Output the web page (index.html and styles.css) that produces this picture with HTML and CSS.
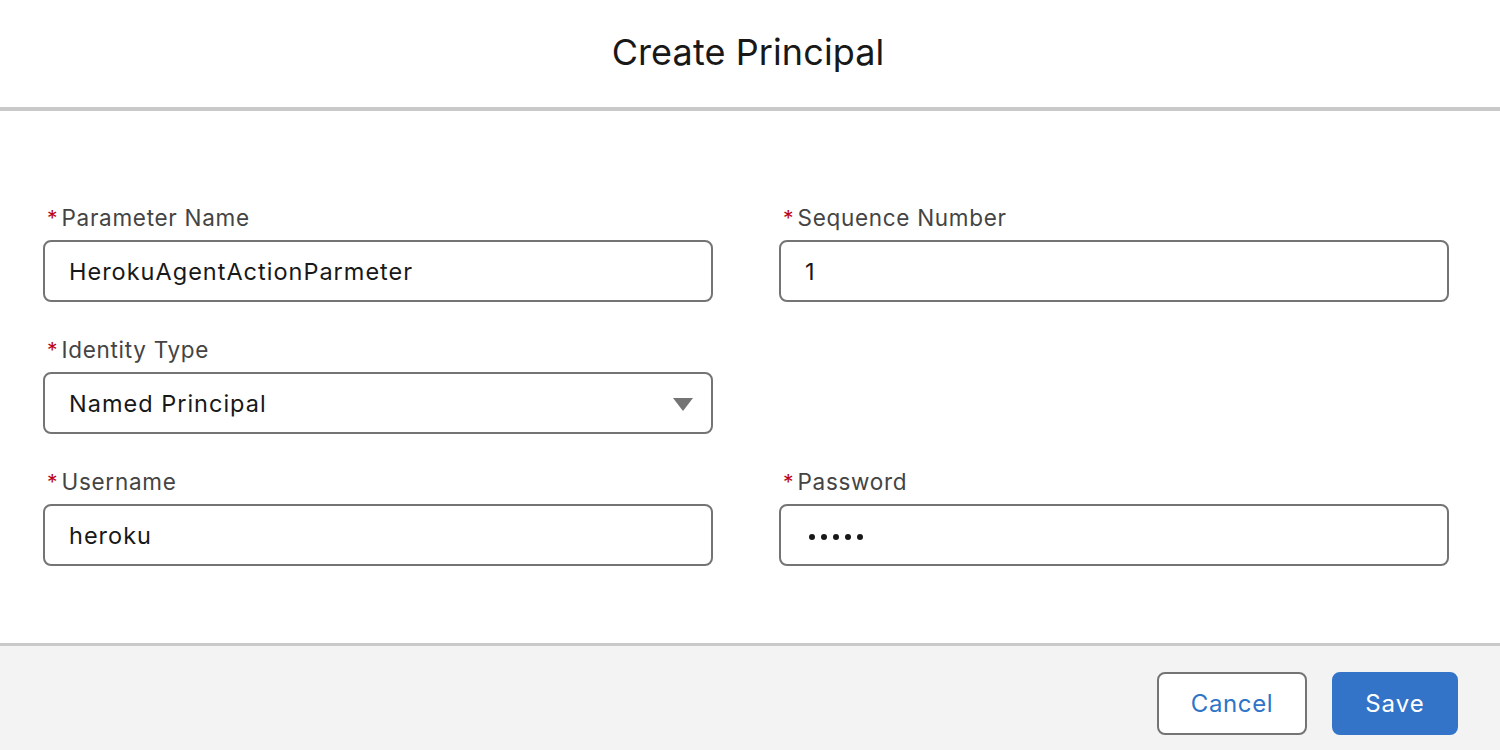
FILE: index.html
```html
<!DOCTYPE html>
<html lang="en">
<head>
<meta charset="utf-8">
<title>Create Principal</title>
<link rel="stylesheet" href="styles.css">
</head>
<body>
<div class="modal">
  <header class="modal-header">
    <h1 class="modal-title">Create Principal</h1>
  </header>
  <main class="modal-body">
    <div class="form-grid">
      <div class="field">
        <label class="field-label"><abbr class="req">*</abbr>Parameter Name</label>
        <div class="input"><span class="value">HerokuAgentActionParmeter</span></div>
      </div>
      <div class="field">
        <label class="field-label"><abbr class="req">*</abbr>Sequence Number</label>
        <div class="input"><span class="value">1</span></div>
      </div>
      <div class="field">
        <label class="field-label"><abbr class="req">*</abbr>Identity Type</label>
        <div class="input select">
          <span class="value">Named Principal</span>
          <svg class="caret" width="20" height="13" viewBox="0 0 20 13"><path d="M0 0 H20 L10 13 Z" fill="#747474"/></svg>
        </div>
      </div>
      <div class="field empty"></div>
      <div class="field">
        <label class="field-label"><abbr class="req">*</abbr>Username</label>
        <div class="input"><span class="value">heroku</span></div>
      </div>
      <div class="field">
        <label class="field-label"><abbr class="req">*</abbr>Password</label>
        <div class="input"><span class="dots"><i></i><i></i><i></i><i></i><i></i></span></div>
      </div>
    </div>
  </main>
  <footer class="modal-footer">
    <button class="btn btn-neutral">Cancel</button>
    <button class="btn btn-brand">Save</button>
  </footer>
</div>
</body>
</html>
```
FILE: styles.css
```css
* { box-sizing: border-box; }
html, body {
  margin: 0;
  padding: 0;
  background: #ffffff;
  font-family: Inter, "Noto Sans", "Liberation Sans", sans-serif;
  color: #181818;
}
.modal {
  width: 1500px;
  height: 750px;
  display: flex;
  flex-direction: column;
}
.modal-header {
  height: 111px;
  border-bottom: 4px solid #c9c9c9;
  display: flex;
  justify-content: center;
  padding: 28px 4px 0 0;
}
.modal-title {
  margin: 0;
  font-size: 36px;
  font-weight: 400;
  line-height: 48px;
  letter-spacing: 0.1px;
  color: #181818;
}
.modal-body {
  height: 532px;
  padding: 93px 51px 0 43px;
}
.form-grid {
  display: grid;
  grid-template-columns: 670px 670px;
  column-gap: 66px;
  row-gap: 34px;
}
.field {
  display: flex;
  flex-direction: column;
  gap: 8px;
}
.field.empty { min-height: 98px; }
.field-label {
  display: block;
  height: 28px;
  font-size: 22.5px;
  line-height: 28px;
  letter-spacing: 0.7px;
  color: #444444;
  padding-left: 4px;
}
.req {
  color: #ba0517;
  text-decoration: none;
  border: 0;
  margin-right: 4px;
  font-size: 21px;
  line-height: 1;
  letter-spacing: 0;
}
.input {
  height: 62px;
  border: 2px solid #747474;
  border-radius: 8px;
  background: #fff;
  display: flex;
  align-items: center;
  padding: 0 18px 0 24px;
}
.value {
  font-size: 23.5px;
  letter-spacing: 1px;
  color: #181818;
  padding-top: 1px;
}
.select { justify-content: space-between; }
.caret { margin-top: 2px; }
.dots {
  display: flex;
  gap: 6px;
  padding-left: 4px;
  margin-top: 3px;
}
.dots i {
  display: block;
  width: 6px;
  height: 6px;
  border-radius: 50%;
  background: #181818;
}
.modal-footer {
  flex: 1;
  background: #f3f3f3;
  border-top: 3px solid #c9c9c9;
  display: flex;
  justify-content: flex-end;
  align-items: flex-start;
  gap: 25px;
  padding: 26px 42px 0 0;
}
.btn {
  height: 63px;
  border-radius: 8px;
  font-family: inherit;
  font-size: 24px;
  cursor: pointer;
  padding: 0;
}
.btn-neutral {
  width: 150px;
  background: #ffffff;
  border: 2px solid #747474;
  color: #2e74c7;
  letter-spacing: 0.6px;
}
.btn-brand {
  width: 126px;
  background: #3374c9;
  border: 2px solid #3374c9;
  color: #ffffff;
  letter-spacing: 1px;
}
```
